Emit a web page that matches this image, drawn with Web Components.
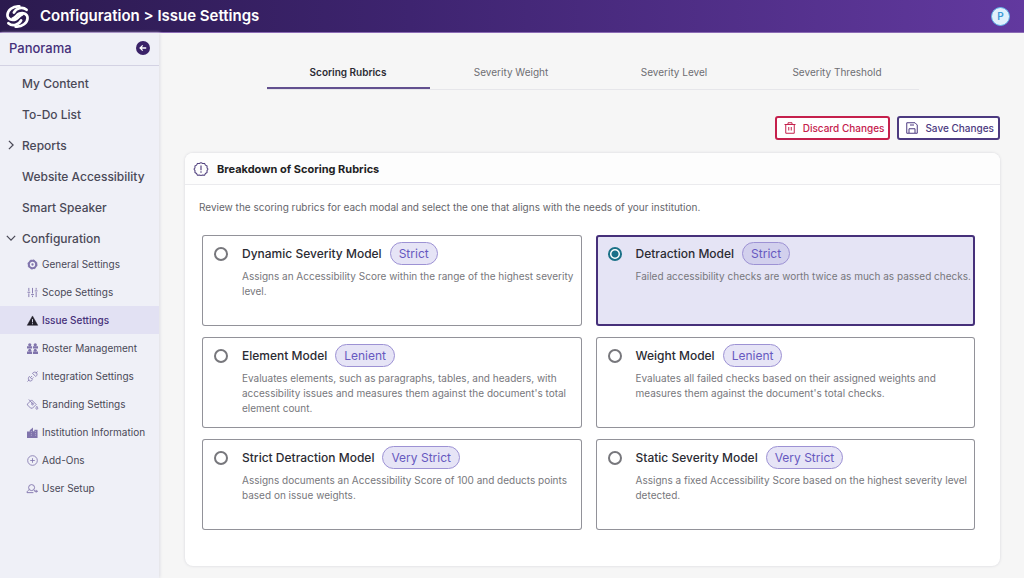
<!DOCTYPE html>
<html lang="en">
<head>
<meta charset="utf-8">
<meta name="viewport" content="width=device-width, initial-scale=1">
<title>Configuration &gt; Issue Settings</title>
<style>
  body {
    margin: 0;
    font-family: Inter, "Liberation Sans", sans-serif;
    color: #2b2b33;
    background: #f6f6f6;
    --purple: #3a2268;
    --lilac: #e5e4f5;
    --red: #c5204c;
  }
</style>
</head>
<body>
<app-shell>
  <app-header slot="header" user="P">Configuration &gt; Issue Settings</app-header>

  <side-nav slot="nav" heading="Panorama">
    <nav-item>My Content</nav-item>
    <nav-item>To-Do List</nav-item>
    <nav-item arrow="right">Reports</nav-item>
    <nav-item>Website Accessibility</nav-item>
    <nav-item>Smart Speaker</nav-item>
    <nav-item arrow="down">Configuration</nav-item>
    <sub-item slot="sub" icon="gear">General Settings</sub-item>
    <sub-item slot="sub" icon="sliders">Scope Settings</sub-item>
    <sub-item slot="sub" icon="warning" active>Issue Settings</sub-item>
    <sub-item slot="sub" icon="roster">Roster Management</sub-item>
    <sub-item slot="sub" icon="plug">Integration Settings</sub-item>
    <sub-item slot="sub" icon="paint">Branding Settings</sub-item>
    <sub-item slot="sub" icon="building">Institution Information</sub-item>
    <sub-item slot="sub" icon="plus">Add-Ons</sub-item>
    <sub-item slot="sub" icon="user">User Setup</sub-item>
  </side-nav>

  <tab-bar tabs="Scoring Rubrics,Severity Weight,Severity Level,Severity Threshold"></tab-bar>

  <tool-bar>
    <action-button icon="trash" danger>Discard Changes</action-button>
    <action-button icon="save">Save Changes</action-button>
  </tool-bar>

  <settings-panel heading="Breakdown of Scoring Rubrics">
    <span slot="intro">Review the scoring rubrics for each modal and select the one that aligns with the needs of your institution.</span>
    <rubric-card heading="Dynamic Severity Model" level="Strict">Assigns an Accessibility Score within the range of the highest severity level.</rubric-card>
    <rubric-card heading="Detraction Model" level="Strict" selected>Failed accessibility checks are worth twice as much as passed checks.</rubric-card>
    <rubric-card heading="Element Model" level="Lenient">Evaluates elements, such as paragraphs, tables, and headers, with accessibility issues and measures them against the document's total element count.</rubric-card>
    <rubric-card heading="Weight Model" level="Lenient">Evaluates all failed checks based on their assigned weights and measures them against the document's total checks.</rubric-card>
    <rubric-card heading="Strict Detraction Model" level="Very Strict">Assigns documents an Accessibility Score of 100 and deducts points based on issue weights.</rubric-card>
    <rubric-card heading="Static Severity Model" level="Very Strict">Assigns a fixed Accessibility Score based on the highest severity level detected.</rubric-card>
  </settings-panel>
</app-shell>

<script>
const icons = {
    logo: '<g fill="none" stroke="currentColor" stroke-width="2.8" stroke-linecap="round"><path d="M14 1.500C7 .8 1.500 5.500 1.500 10.500c0 4.200 4.500 6 8.500 4.500 3.500-1.300 3.500-4.200 7-5.200"/><path d="M10 22.500C17 23.200 22.500 18.500 22.500 13.500c0-4.200-4.500-6-8.500-4.500-3.500 1.300-3.500 4.200-7 5.200"/><path d="M21.500 5C17 1.200 10.500 3.500 8.200 8"/><path d="M2.500 19C7 22.800 13.500 20.500 15.800 16"/></g>',
    back: '<circle cx="12" cy="12" r="12" fill="currentColor"/><path d="M17.500 12H7m4.500-4.500L7 12l4.500 4.500" fill="none" stroke="#fff" stroke-width="2.200"/>',
    right: '<path d="M7 2l10 10L7 22" fill="none" stroke="currentColor" stroke-width="3"/>',
    down: '<path d="M2 7l10 10L22 7" fill="none" stroke="currentColor" stroke-width="3"/>',
    gear: '<circle cx="12" cy="12" r="8" fill="none" stroke="currentColor" stroke-width="4.500"/><circle cx="12" cy="12" r="10" fill="none" stroke="currentColor" stroke-width="2" stroke-dasharray="4.100 3.750"/><circle cx="12" cy="12" r="2.500" fill="currentColor"/>',
    sliders: '<path d="M4 2v7m0 5v8M12 2v12m0 5v3M20 2v4m0 5v11M1 11.500h6M9 16.500h6M17 8.500h6" fill="none" stroke="currentColor" stroke-width="2"/>',
    warning: '<path d="M12 2L23.500 22.500H.5z" fill="#211f2a" stroke="#211f2a" stroke-linejoin="round"/><path d="M12 9v7m0 2v2.200" stroke="#e5e4f5" stroke-width="2"/>',
    roster: '<g fill="currentColor"><circle cx="6" cy="4" r="3.500"/><circle cx="18" cy="4" r="3.500"/><path d="M0 7h11v5H0zM13 7h11v5H13z"/><circle cx="6" cy="16" r="3.300"/><circle cx="18" cy="16" r="3.300"/><path d="M0 18.500h11V24H0zM13 18.500h11V24H13z"/></g>',
    plug: '<g fill="none" stroke="currentColor" stroke-width="1.800"><path d="M1 23l4-4M23 1l-4 4M5 12l7 7-2 2c-2 1.500-4 1-5.500-.5S2.500 16.500 3.500 14zM12 5l7 7 2-2c1.500-2 1-4.500-.5-6S16.500 2 14.500 3zM8 14l3-3m0 6l3-3"/></g>',
    paint: '<g fill="none" stroke="currentColor" stroke-width="1.800"><path d="M1 11L10 2l10 10-8 8H8l-7-7zM4 1l8 9"/><circle cx="12" cy="11" r="2"/><path d="M21.500 16c3 4 2 6.500 0 6.500s-3-2.500 0-6.500z"/></g>',
    building: '<path d="M0 24V10h6V7l7-6v8h3V6h7v18z" fill="currentColor"/><path d="M9.500 9v11M18.500 9v11" stroke="#eff0f7" stroke-dasharray="2 2"/>',
    plus: '<g fill="none" stroke="currentColor" stroke-width="1.800"><circle cx="12" cy="12" r="10.500"/><path d="M12 7v10M7 12h10"/></g>',
    user: '<g fill="none" stroke="currentColor" stroke-width="2"><circle cx="10" cy="10" r="6.500"/><path d="M0 21c0-3 2-5 5-6m10 0l2 2M0 21h14M16 18h8m-4-3v6"/></g>',
    trash: '<g fill="none" stroke="currentColor" stroke-width="2"><path d="M1 5h22M3.500 5v17.500h17V5M8 5V1.500h8V5M9.500 10v7M14.500 10v7"/></g>',
    save: '<g fill="none" stroke="currentColor" stroke-width="2"><path d="M1.500 1.500H18L22.500 6v16.500h-21zM6 22v-8.500h12V22M8 6h8"/></g>',
    alert: '<path d="M12 1l2.800 1.600 3.300-.2 1.500 2.900 2.800 1.600-.1 3.300L24 12l-1.700 2.800.1 3.300-2.800 1.600-1.500 2.900-3.300-.2L12 23l-2.800-.6-3.300.2-1.500-2.900-2.800-1.600.1-3.300L0 12l1.700-1.800-.1-3.300 2.800-1.600 1.500-2.900 3.300.2z" fill="none" stroke="currentColor" stroke-width="1.800" stroke-linejoin="round"/><path d="M12 6v8m0 2v2.500" stroke="currentColor" stroke-width="2"/>'
};

const icon = (name, size) =>
    `<svg width="${size}" height="${size}" viewBox="0 0 24 24" overflow="visible" aria-hidden="true">${icons[name] || ''}</svg>`;

class BaseElement extends HTMLElement {
    constructor() {
        super();
        this.attachShadow({ mode: 'open' });
    }

    connectedCallback() {
        this.shadowRoot.innerHTML = `
    <style>
      * { box-sizing: border-box; }
      svg { display: block; flex: none; }
      a { color: inherit; text-decoration: none; }
      button { font-family: inherit; cursor: pointer; }
    </style>
    ${this.render()}`;
        this.setup();
    }

    setup() {}
}

class AppShell extends BaseElement {
    render() {
        return `
    <style>
      :host { display: flex; flex-direction: column; min-height: 100vh; }
      .body { display: flex; flex: 1; }
      main { flex: 1; min-width: 0; padding: 22px 24px 12px 26px; }
    </style>
    <slot name="header"></slot>
    <div class="body">
      <slot name="nav"></slot>
      <main><slot></slot></main>
    </div>`;
    }
}

class AppHeader extends BaseElement {
    render() {
        return `
    <style>
      :host { display: block; }
      header {
        display: flex;
        align-items: center;
        gap: 11px;
        height: 33px;
        padding: 0 14px 0 6px;
        color: #fff;
        background: linear-gradient(90deg, #2b1a4e, #3e2470 40%, #62399f);
        border-bottom: 1px solid #8b6bb5;
      }
      h1 { flex: 1; margin: 0; font-size: 15px; font-weight: 600; line-height: 20px; }
      .avatar {
        width: 19px;
        height: 19px;
        padding: 0;
        border: 1px solid #5fb0e6;
        border-radius: 50%;
        background: #e0f0fc;
        color: #3c9ad6;
        font-size: 10px;
        font-weight: 600;
        line-height: 16px;
      }
    </style>
    <header>
      ${icon('logo', 23)}
      <h1><slot></slot></h1>
      <button class="avatar" aria-label="Account">${this.getAttribute('user')}</button>
    </header>`;
    }
}

class SideNav extends BaseElement {
    render() {
        return `
    <style>
      :host {
        display: block;
        flex: none;
        width: 159px;
        background: #eff0f7;
        box-shadow: 1px 0 3px #dedee4;
      }
      .top {
        display: flex;
        align-items: center;
        justify-content: space-between;
        height: 33px;
        padding: 0 9px 2px 9px;
        border-bottom: 1px solid #d3d2e3;
        color: #46307a;
      }
      h2 { margin: 0; font-size: 13px; font-weight: 500; }
      .top button { padding: 0; border: 0; background: none; color: var(--purple); }
      .items { display: flex; flex-direction: column; gap: 7px; padding-top: 5px; }
    </style>
    <div class="top">
      <h2>${this.getAttribute('heading')}</h2>
      <button aria-label="Collapse menu">${icon('back', 14)}</button>
    </div>
    <nav>
      <div class="items"><slot></slot></div>
      <slot name="sub"></slot>
    </nav>`;
    }
}

class NavItem extends BaseElement {
    render() {
        return `
    <style>
      :host { display: block; }
      a {
        display: grid;
        grid-template-columns: 10px 1fr;
        align-items: center;
        gap: 6px;
        height: 24px;
        padding-left: 6px;
        color: #4a4957;
        font-size: 12px;
        font-weight: 500;
        white-space: nowrap;
      }
    </style>
    <a href="#">${icon(this.getAttribute('arrow'), 10)}<slot></slot></a>`;
    }
}

class SubItem extends BaseElement {
    render() {
        return `
    <style>
      :host { display: block; }
      a {
        display: flex;
        align-items: center;
        gap: 4px;
        height: 28px;
        padding-left: 27px;
        color: #4a4957;
        font-size: 10px;
        white-space: nowrap;
      }
      svg { color: #8074ac; }
      :host([active]) a { background: #e2e1f3; color: #46307a; font-weight: 500; }
    </style>
    <a href="#">${icon(this.getAttribute('icon'), 11)}<slot></slot></a>`;
    }
}

class TabBar extends BaseElement {
    render() {
        const tabs = this.getAttribute('tabs').split(',');
        return `
    <style>
      :host { display: block; width: 80%; margin: 0 auto 26px; }
      div { display: flex; border-bottom: 1px solid #e6e6ea; }
      button {
        flex: 1;
        height: 34px;
        padding: 2px 0 0;
        border: 0;
        border-bottom: 2px solid transparent;
        background: none;
        color: #6e6e73;
        font-size: 10px;
        font-weight: 400;
      }
      button[aria-selected="true"] { border-color: #62508f; color: #2b2b33; font-weight: 600; }
    </style>
    <div role="tablist">
      ${tabs.map((tab, i) => `<button role="tab" aria-selected="${i === 0}">${tab}</button>`).join('')}
    </div>`;
    }

    setup() {
        const buttons = this.shadowRoot.querySelectorAll('button');
        buttons.forEach(button => button.addEventListener('click', () => {
            buttons.forEach(b => b.setAttribute('aria-selected', b === button));
        }));
    }
}

class ToolBar extends BaseElement {
    render() {
        return `
    <style>
      :host { display: flex; justify-content: flex-end; gap: 7px; margin-bottom: 13px; }
    </style>
    <slot></slot>`;
    }
}

class ActionButton extends BaseElement {
    render() {
        return `
    <style>
      :host { display: block; color: #4c3a80; }
      :host([danger]) { color: var(--red); }
      button {
        display: flex;
        align-items: center;
        gap: 7px;
        height: 24px;
        padding: 0 4px 0 7px;
        border: 2px solid currentColor;
        border-radius: 3px;
        background: #fff;
        color: inherit;
        font-size: 10px;
        font-weight: 500;
      }
    </style>
    <button>${icon(this.getAttribute('icon'), 12)}<slot></slot></button>`;
    }
}

class SettingsPanel extends BaseElement {
    render() {
        return `
    <style>
      :host {
        display: block;
        border-radius: 8px;
        background: #fff;
        box-shadow: 0 0 3px #d4d4da;
      }
      .head {
        display: flex;
        align-items: center;
        gap: 9px;
        height: 32px;
        padding-left: 9px;
        border-bottom: 1px solid #ebebee;
        border-radius: 8px 8px 0 0;
        background: #fdfdfd;
        color: #52427f;
      }
      h2 { margin: 0; color: #1f1f24; font-size: 11px; font-weight: 700; }
      p { margin: 0; padding: 14px 14px 20px; color: #66666b; font-size: 10px; line-height: 16px; }
      .grid {
        display: grid;
        grid-template-columns: 1fr 1fr;
        gap: 11px 14px;
        padding: 0 25px 36px 17px;
      }
    </style>
    <div class="head">${icon('alert', 14)}<h2>${this.getAttribute('heading')}</h2></div>
    <p><slot name="intro"></slot></p>
    <div class="grid" role="radiogroup" aria-label="${this.getAttribute('heading')}"><slot></slot></div>`;
    }

    setup() {
        // radios sit in separate shadow roots, so the panel keeps one selected
        this.addEventListener('rubric-select', e => {
            this.querySelectorAll('rubric-card').forEach(card => card.select(card === e.target));
        });
    }
}

class RubricCard extends BaseElement {
    render() {
        return `
    <style>
      :host {
        display: block;
        min-height: 91px;
        border-radius: 3px;
        box-shadow: inset 0 0 0 1px #929299;
      }
      :host([selected]) { background: var(--lilac); box-shadow: inset 0 0 0 2px #46307a; }
      label {
        display: grid;
        grid-template-columns: 14px 1fr;
        column-gap: 14px;
        align-items: center;
        padding: 7px 2px 7px 12px;
      }
      input {
        appearance: none;
        width: 14px;
        height: 14px;
        margin: 0;
        border: 2px solid #77777c;
        border-radius: 50%;
        background: #fff;
      }
      input:checked {
        border-color: #1b7187;
        background: radial-gradient(#1b7187 0 3px, #fff 4px);
      }
      .title {
        display: flex;
        align-items: center;
        gap: 8px;
        font-size: 12px;
        font-weight: 500;
        white-space: nowrap;
      }
      .level {
        padding: 0 8px;
        border: 1px solid #9d92d4;
        border-radius: 12px;
        background: #e6e4f6;
        color: #6759c0;
        font-weight: 400;
        line-height: 21px;
      }
      :host([selected]) .level { background: #d2d0ed; }
      .text { grid-column: 2; padding-top: 4px; color: #77777c; font-size: 10px; line-height: 15px; }
    </style>
    <label>
      <input type="radio" name="rubric"${this.hasAttribute('selected') ? ' checked' : ''}>
      <span class="title">${this.getAttribute('heading')}<span class="level">${this.getAttribute('level')}</span></span>
      <span class="text"><slot></slot></span>
    </label>`;
    }

    setup() {
        this.input = this.shadowRoot.querySelector('input');
        this.input.addEventListener('change', () => {
            this.dispatchEvent(new CustomEvent('rubric-select', { bubbles: true }));
        });
    }

    select(on) {
        this.toggleAttribute('selected', on);
        this.input.checked = on;
    }
}

customElements.define('app-shell', AppShell);
customElements.define('app-header', AppHeader);
customElements.define('side-nav', SideNav);
customElements.define('nav-item', NavItem);
customElements.define('sub-item', SubItem);
customElements.define('tab-bar', TabBar);
customElements.define('tool-bar', ToolBar);
customElements.define('action-button', ActionButton);
customElements.define('settings-panel', SettingsPanel);
customElements.define('rubric-card', RubricCard);
</script>
</body>
</html>
